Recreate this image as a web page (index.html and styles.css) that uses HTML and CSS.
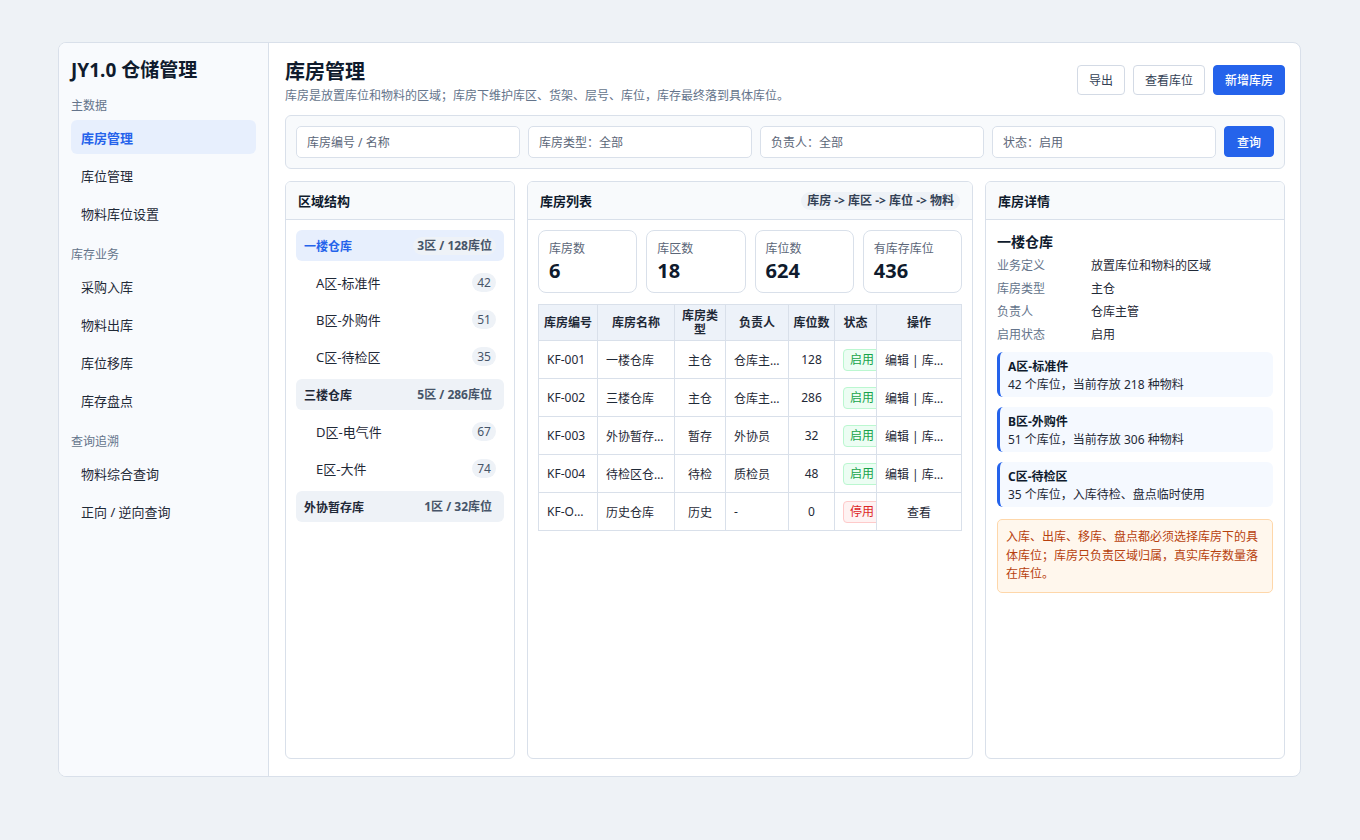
FILE: index.html
```html
<!DOCTYPE html>
<html lang="zh-CN">
<head>
  <meta charset="UTF-8">
  <title>库房管理 - JY1.0 仓储管理</title>
  <link rel="stylesheet" href="styles.css">
</head>
<body>
  <div class="app">
    <aside class="sidebar">
      <h1 class="brand">JY1.0 仓储管理</h1>

      <div class="nav-label">主数据</div>
      <a class="nav-item active" href="#">库房管理</a>
      <a class="nav-item" href="#">库位管理</a>
      <a class="nav-item" href="#">物料库位设置</a>

      <div class="nav-label">库存业务</div>
      <a class="nav-item" href="#">采购入库</a>
      <a class="nav-item" href="#">物料出库</a>
      <a class="nav-item" href="#">库位移库</a>
      <a class="nav-item" href="#">库存盘点</a>

      <div class="nav-label">查询追溯</div>
      <a class="nav-item" href="#">物料综合查询</a>
      <a class="nav-item" href="#">正向 / 逆向查询</a>
    </aside>

    <main class="main">
      <div class="page-head">
        <div>
          <h2 class="page-title">库房管理</h2>
          <p class="page-desc">库房是放置库位和物料的区域；库房下维护库区、货架、层号、库位，库存最终落到具体库位。</p>
        </div>
        <div class="actions">
          <button class="btn">导出</button>
          <button class="btn">查看库位</button>
          <button class="btn btn-primary">新增库房</button>
        </div>
      </div>

      <div class="filter-bar">
        <input type="text" placeholder="库房编号 / 名称">
        <input type="text" placeholder="库房类型：全部">
        <input type="text" placeholder="负责人：全部">
        <input type="text" placeholder="状态：启用">
        <button class="btn btn-primary btn-query">查询</button>
      </div>

      <div class="panels">
        <!-- left: tree -->
        <section class="panel">
          <div class="panel-head">
            <span class="panel-title">区域结构</span>
          </div>
          <div class="panel-body tree">
            <div class="tree-group active"><span>一楼仓库</span><span class="group-meta">3区 / 128库位</span></div>
            <div class="tree-item"><span>A区-标准件</span><span class="count">42</span></div>
            <div class="tree-item"><span>B区-外购件</span><span class="count">51</span></div>
            <div class="tree-item"><span>C区-待检区</span><span class="count">35</span></div>
            <div class="tree-group"><span>三楼仓库</span><span class="group-meta">5区 / 286库位</span></div>
            <div class="tree-item"><span>D区-电气件</span><span class="count">67</span></div>
            <div class="tree-item"><span>E区-大件</span><span class="count">74</span></div>
            <div class="tree-group"><span>外协暂存库</span><span class="group-meta">1区 / 32库位</span></div>
          </div>
        </section>

        <!-- middle: list -->
        <section class="panel">
          <div class="panel-head">
            <span class="panel-title">库房列表</span>
            <span class="chip">库房 -&gt; 库区 -&gt; 库位 -&gt; 物料</span>
          </div>
          <div class="panel-body">
            <div class="stats">
              <div class="stat"><div class="stat-label">库房数</div><div class="stat-value">6</div></div>
              <div class="stat"><div class="stat-label">库区数</div><div class="stat-value">18</div></div>
              <div class="stat"><div class="stat-label">库位数</div><div class="stat-value">624</div></div>
              <div class="stat"><div class="stat-label">有库存库位</div><div class="stat-value">436</div></div>
            </div>

            <table class="grid">
              <colgroup>
                <col style="width:59px"><col style="width:77px"><col style="width:51px"><col style="width:63px">
                <col style="width:46px"><col style="width:42px"><col style="width:85px">
              </colgroup>
              <thead>
                <tr>
                  <th>库房编号</th><th>库房名称</th><th class="wrap">库房类型</th><th>负责人</th><th>库位数</th><th>状态</th><th>操作</th>
                </tr>
              </thead>
              <tbody>
                <tr>
                  <td>KF-001</td><td class="name">一楼仓库</td><td class="c">主仓</td><td>仓库主管</td><td class="c">128</td>
                  <td><span class="tag on">启用</span></td><td class="c">编辑 | 库位管理</td>
                </tr>
                <tr>
                  <td>KF-002</td><td class="name">三楼仓库</td><td class="c">主仓</td><td>仓库主管</td><td class="c">286</td>
                  <td><span class="tag on">启用</span></td><td class="c">编辑 | 库位管理</td>
                </tr>
                <tr>
                  <td>KF-003</td><td class="name">外协暂存库</td><td class="c">暂存</td><td>外协员</td><td class="c">32</td>
                  <td><span class="tag on">启用</span></td><td class="c">编辑 | 库位管理</td>
                </tr>
                <tr>
                  <td>KF-004</td><td class="name">待检区仓库</td><td class="c">待检</td><td>质检员</td><td class="c">48</td>
                  <td><span class="tag on">启用</span></td><td class="c">编辑 | 库位管理</td>
                </tr>
                <tr>
                  <td>KF-OLD-01</td><td class="name">历史仓库</td><td class="c">历史</td><td>-</td><td class="c">0</td>
                  <td><span class="tag off">停用</span></td><td class="c">查看</td>
                </tr>
              </tbody>
            </table>
          </div>
        </section>

        <!-- right: detail -->
        <section class="panel">
          <div class="panel-head">
            <span class="panel-title">库房详情</span>
          </div>
          <div class="panel-body detail">
            <h3 class="detail-name">一楼仓库</h3>
            <div class="kv"><span class="k">业务定义</span><span>放置库位和物料的区域</span></div>
            <div class="kv"><span class="k">库房类型</span><span>主仓</span></div>
            <div class="kv"><span class="k">负责人</span><span>仓库主管</span></div>
            <div class="kv"><span class="k">启用状态</span><span>启用</span></div>

            <div class="zones">
              <div class="zone">
                <div class="zone-title">A区-标准件</div>
                <div>42 个库位，当前存放 218 种物料</div>
              </div>
              <div class="zone">
                <div class="zone-title">B区-外购件</div>
                <div>51 个库位，当前存放 306 种物料</div>
              </div>
              <div class="zone">
                <div class="zone-title">C区-待检区</div>
                <div>35 个库位，入库待检、盘点临时使用</div>
              </div>
            </div>

            <div class="notice">入库、出库、移库、盘点都必须选择库房下的具体库位；库房只负责区域归属，真实库存数量落在库位。</div>
          </div>
        </section>
      </div>
    </main>
  </div>
</body>
</html>
```

FILE: styles.css
```css
* {
  box-sizing: border-box;
}

body {
  margin: 0;
  background-color: #eef2f6;
  font-family: "Noto Sans", "Noto Sans CJK SC", sans-serif;
  color: #1f2937;
}

.app {
  width: 1243px;
  height: 735px;
  margin: 42px 0 0 58px;
  display: flex;
  background-color: #fff;
  border: 1px solid #d9e0ea;
  border-radius: 8px;
  overflow: hidden;
}

/* Sidebar */
.sidebar {
  width: 210px;
  flex-shrink: 0;
  padding: 14px 12px;
  background-color: #f8fafd;
  border-right: 1px solid #d9e0ea;
}

.brand {
  font-size: 19px;
  line-height: 26px;
  font-weight: 700;
  color: #0f1b2d;
  margin: 0 0 14px;
}

.nav-label {
  font-size: 12px;
  line-height: 18px;
  color: #64748b;
  margin: 16px 0 5px;
}

.brand + .nav-label {
  margin-top: 0;
}

.nav-item {
  display: flex;
  align-items: center;
  height: 34px;
  padding: 0 10px;
  margin-bottom: 4px;
  font-size: 13px;
  color: #1f2937;
  text-decoration: none;
  border-radius: 6px;
}

.nav-item.active {
  background-color: #e7effd;
  color: #2563eb;
  font-weight: 700;
}

/* Main */
.main {
  flex: 1;
  min-width: 0;
  padding: 16px 15px 17px 16px;
  display: flex;
  flex-direction: column;
}

.page-head {
  display: flex;
  justify-content: space-between;
  align-items: flex-start;
}

.page-title {
  font-size: 20px;
  line-height: 26px;
  font-weight: 700;
  color: #0f1b2d;
  margin: 0;
}

.page-desc {
  font-size: 12px;
  line-height: 18px;
  color: #64748b;
  margin: 2px 0 0;
}

.actions {
  display: flex;
  gap: 8px;
  margin-top: 6px;
}

.btn {
  height: 30px;
  padding: 0 11px;
  font-family: inherit;
  font-size: 12px;
  color: #334155;
  background-color: #fff;
  border: 1px solid #d3dae5;
  border-radius: 4px;
  cursor: pointer;
}

.btn-primary {
  background-color: #2563eb;
  border-color: #2563eb;
  color: #fff;
  font-weight: 500;
}

.filter-bar {
  display: flex;
  gap: 8px;
  margin-top: 10px;
  padding: 10px;
  background-color: #f8fafc;
  border: 1px solid #d9e0ea;
  border-radius: 6px;
}

.filter-bar input {
  flex: 1;
  min-width: 0;
  height: 32px;
  padding: 0 10px;
  font-family: inherit;
  font-size: 12px;
  color: #1f2937;
  background-color: #fff;
  border: 1px solid #d9e0ea;
  border-radius: 5px;
}

.filter-bar input::placeholder {
  color: #5b6678;
}

.btn-query {
  height: 31px;
  padding: 0 12px;
}

/* Panels */
.panels {
  flex: 1;
  min-height: 0;
  display: grid;
  grid-template-columns: 230px 1fr 300px;
  gap: 12px;
  margin-top: 12px;
}

.panel {
  border: 1px solid #d9e0ea;
  border-radius: 6px;
  background-color: #fff;
  overflow: hidden;
}

.panel-head {
  height: 38px;
  padding: 0 12px;
  display: flex;
  align-items: center;
  justify-content: space-between;
  background-color: #f8fafc;
  border-bottom: 1px solid #d9e0ea;
}

.panel-title {
  font-size: 13px;
  font-weight: 700;
  color: #0f1b2d;
}

.chip {
  font-size: 12px;
  font-weight: 700;
  color: #334155;
  background-color: #eef2f7;
  border-radius: 10px;
  padding: 1px 6px;
  line-height: 16px;
}

.panel-body {
  padding: 10px;
}

/* Tree */
.tree-group {
  height: 31px;
  padding: 0 8px;
  margin: 4px 0 3px;
  display: flex;
  align-items: center;
  justify-content: space-between;
  background-color: #eef2f7;
  border-radius: 6px;
  font-size: 12px;
  font-weight: 700;
  color: #1f2937;
}

.tree-group:first-child {
  margin-top: 0;
}

.tree-group.active {
  background-color: #e7effd;
  color: #2563eb;
}

.group-meta {
  font-size: 12px;
  font-weight: 700;
  color: #475569;
  background-color: #eef2f7;
  border-radius: 10px;
  padding: 1px 4px;
  line-height: 16px;
}

.tree-item {
  height: 37px;
  padding: 0 8px 0 20px;
  display: flex;
  align-items: center;
  justify-content: space-between;
  font-size: 13px;
  color: #1f2937;
}

.count {
  min-width: 24px;
  height: 19px;
  padding: 0 5px;
  font-size: 12px;
  line-height: 19px;
  text-align: center;
  color: #475569;
  background-color: #eef2f7;
  border-radius: 10px;
}

/* Stats */
.stats {
  display: grid;
  grid-template-columns: repeat(4, 1fr);
  gap: 9px;
}

.stat {
  height: 63px;
  padding: 9px 10px 7px;
  border: 1px solid #d9e0ea;
  border-radius: 8px;
}

.stat-label {
  font-size: 12px;
  line-height: 18px;
  color: #5b6678;
}

.stat-value {
  font-size: 20px;
  line-height: 26px;
  font-weight: 700;
  color: #0f1b2d;
}

/* Table */
.grid {
  width: 100%;
  margin-top: 11px;
  border-collapse: collapse;
  table-layout: fixed;
  font-size: 12px;
}

.grid th,
.grid td {
  border: 1px solid #d9e0ea;
  white-space: nowrap;
  overflow: hidden;
  text-overflow: ellipsis;
}

.grid th {
  height: 36px;
  padding: 2px 4px;
  line-height: 14px;
  font-weight: 700;
  text-align: center;
  color: #1f2937;
  background-color: #edf2f9;
}

.grid th.wrap {
  white-space: normal;
}

.grid td {
  height: 38px;
  padding: 0 8px;
  color: #1f2937;
}

.grid td.name {
  padding-right: 10px;
}

.grid td.c {
  text-align: center;
}

.tag {
  display: inline-block;
  padding: 2px 6px;
  line-height: 16px;
  border: 1px solid;
  border-radius: 4px;
  font-size: 12px;
}

.tag.on {
  color: #16a34a;
  background-color: #ecfdf3;
  border-color: #bbf7d0;
}

.tag.off {
  color: #dc2626;
  background-color: #fef2f2;
  border-color: #fecaca;
}

/* Detail */
.detail {
  padding: 12px 11px;
}

.detail-name {
  font-size: 14px;
  line-height: 20px;
  font-weight: 700;
  color: #0f1b2d;
  margin: 0 0 2px;
}

.kv {
  display: flex;
  font-size: 12px;
  line-height: 23px;
  color: #1f2937;
}

.kv .k {
  width: 94px;
  color: #64748b;
}

.zones {
  display: flex;
  flex-direction: column;
  gap: 10px;
  margin-top: 6px;
}

.zone {
  padding: 5px 10px 3px 8px;
  background-color: #f5f9ff;
  border-left: 3px solid #2563eb;
  border-radius: 6px;
  font-size: 12px;
  line-height: 18px;
  color: #1f2937;
}

.zone-title {
  font-weight: 700;
  line-height: 19px;
  color: #0f1b2d;
}

.notice {
  margin-top: 12px;
  padding: 8px;
  font-size: 12px;
  line-height: 18.5px;
  color: #b7410e;
  background-color: #fff7ed;
  border: 1px solid #fed7aa;
  border-radius: 5px;
}
```
